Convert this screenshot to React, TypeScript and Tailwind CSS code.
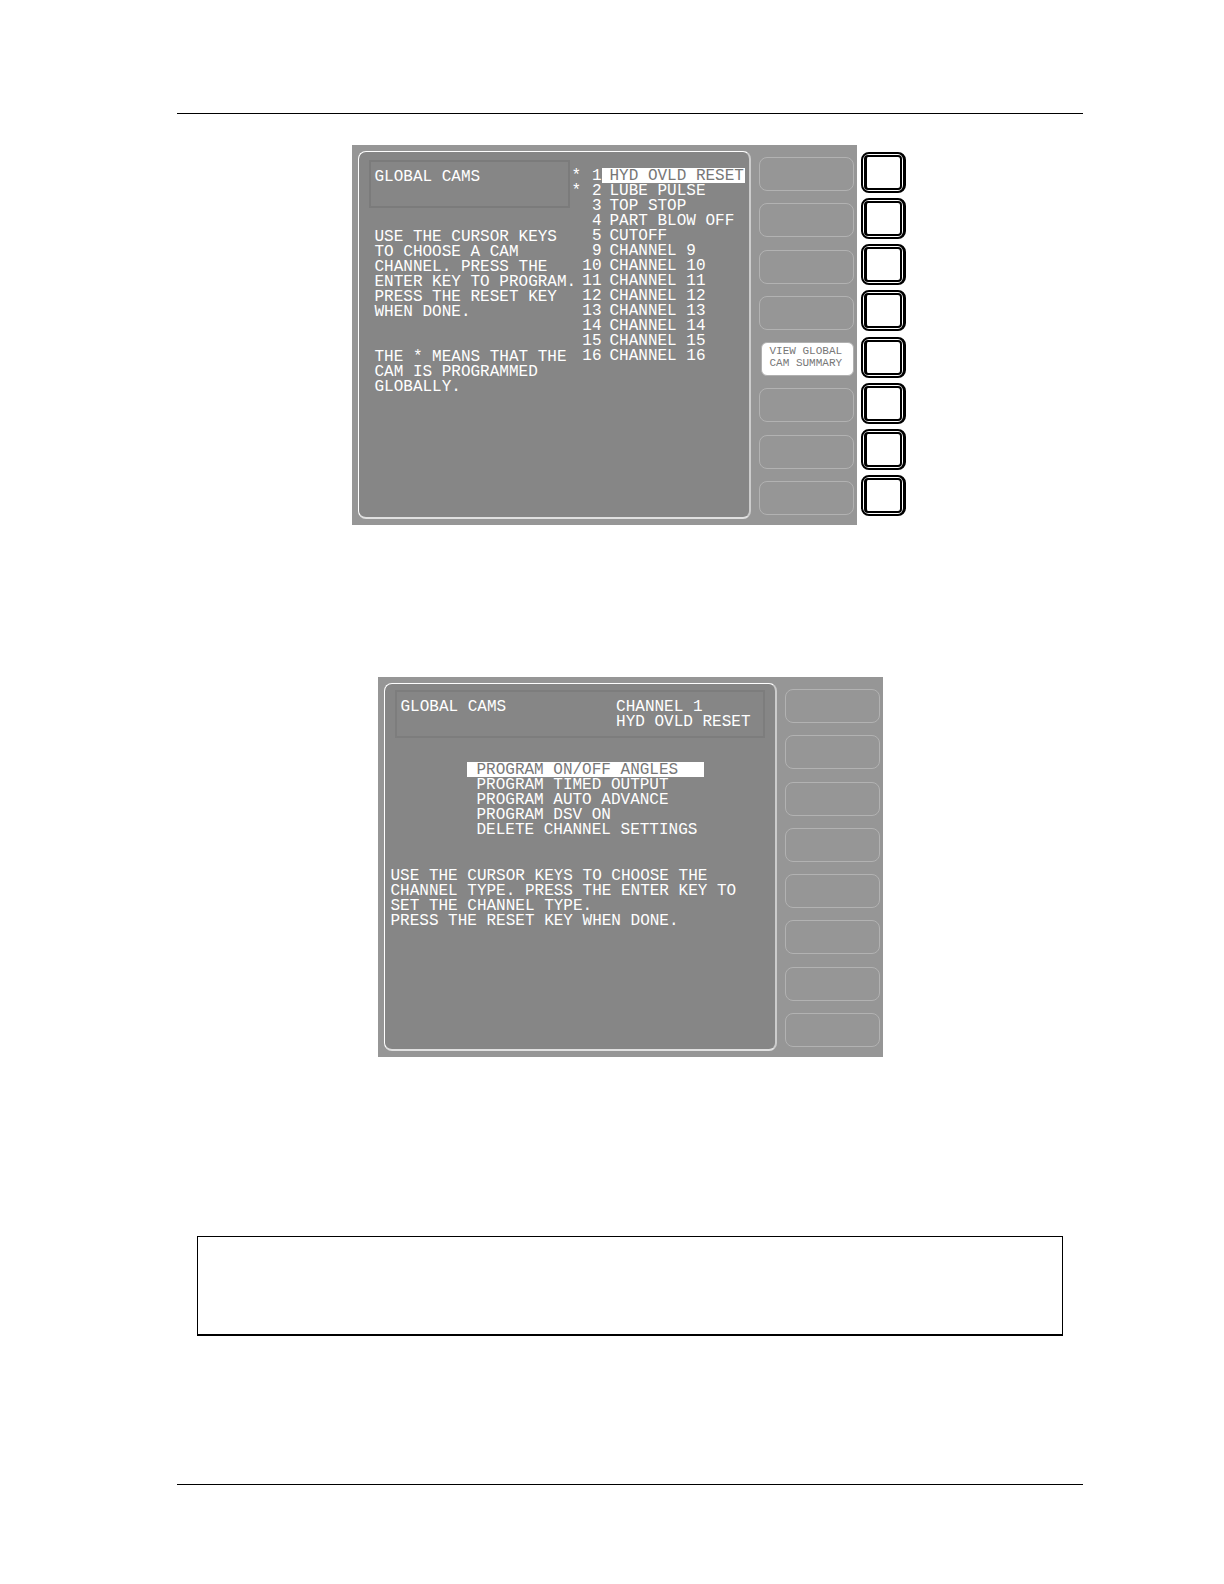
import React from 'react';
import clsx from 'clsx';

type Channel = { num: number; name: string; global?: boolean };

const channels: Channel[] = [
  { num: 1, name: 'HYD OVLD RESET', global: true },
  { num: 2, name: 'LUBE PULSE', global: true },
  { num: 3, name: 'TOP STOP' },
  { num: 4, name: 'PART BLOW OFF' },
  { num: 5, name: 'CUTOFF' },
  { num: 9, name: 'CHANNEL 9' },
  { num: 10, name: 'CHANNEL 10' },
  { num: 11, name: 'CHANNEL 11' },
  { num: 12, name: 'CHANNEL 12' },
  { num: 13, name: 'CHANNEL 13' },
  { num: 14, name: 'CHANNEL 14' },
  { num: 15, name: 'CHANNEL 15' },
  { num: 16, name: 'CHANNEL 16' },
];

const programOptions = [
  'PROGRAM ON/OFF ANGLES',
  'PROGRAM TIMED OUTPUT',
  'PROGRAM AUTO ADVANCE',
  'PROGRAM DSV ON',
  'DELETE CHANNEL SETTINGS',
];

const emptyKeys = ['', '', '', '', '', '', '', ''];
const summaryKeys = ['', '', '', '', 'VIEW GLOBAL\nCAM SUMMARY', '', '', ''];

const SoftKeys: React.FC<{ labels: string[] }> = ({ labels }) => (
  <div className="flex w-[95px] flex-col justify-between pt-1.5 pb-1">
    {labels.map((label, i) => (
      <button
        key={i}
        type="button"
        aria-label={label ? undefined : `Soft key ${i + 1}`}
        className={clsx(
          'h-[34px] rounded-lg border text-left text-[11px] leading-3 whitespace-pre',
          label ? 'ml-0.5 rounded-md border-[#b0b0b0] bg-white pb-1 pl-2 text-[#777777]' : 'border-[#b2b2b2]'
        )}
      >
        {label}
      </button>
    ))}
  </div>
);

const Screen: React.FC<{ labels: string[]; children: React.ReactNode }> = ({ labels, children }) => (
  <div className="flex h-[380px] w-[505px] justify-between bg-[#969696] py-1.5 pr-[3px] pl-1.5">
    <div className="w-[393px] rounded-lg border border-r-2 border-b-2 border-white border-r-[#cccccc] border-b-[#e0e0e0] bg-[#868686] text-[16px] leading-[15px] text-white">
      {children}
    </div>
    <SoftKeys labels={labels} />
  </div>
);

// Buttons on the bezel, one beside each soft key
const HardKeys = () => (
  <div className="flex h-[380px] flex-col justify-between pt-[7px] pb-[9px]">
    {emptyKeys.map((_, i) => (
      <button
        key={i}
        type="button"
        aria-label={`Key ${i + 1}`}
        className="flex h-[41px] w-[45px] rounded-lg border-2 border-r-3 border-black bg-white p-px"
      >
        <span className="h-full w-full rounded-sm border-2 border-l-3 border-black" />
      </button>
    ))}
  </div>
);

const CamListScreen = () => (
  <Screen labels={summaryKeys}>
    <div className="flex pt-2 pl-2.5">
      <div className="w-[201px] shrink-0">
        <h2 className="h-12 border-2 border-[#7b7b7b] pt-2 pl-1">GLOBAL CAMS</h2>
        <p className="mt-[22px] pl-1.5 whitespace-pre">
          {'USE THE CURSOR KEYS\nTO CHOOSE A CAM\nCHANNEL. PRESS THE\nENTER KEY TO PROGRAM.\nPRESS THE RESET KEY\nWHEN DONE.'}
        </p>
        <p className="mt-[30px] pl-1.5 whitespace-pre">
          {'THE * MEANS THAT THE\nCAM IS PROGRAMMED\nGLOBALLY.'}
        </p>
      </div>
      <ul className="mt-2 w-[175px]">
        {channels.map((ch, i) => (
          <li key={ch.num} className="flex h-[15px] leading-[17px]">
            <span className="w-3 pl-0.5">{ch.global && '*'}</span>
            <span className="w-5 text-right">{ch.num}</span>
            <button
              type="button"
              className={clsx('flex-1 pl-2 text-left whitespace-nowrap', i === 0 && 'bg-white text-[#777777]')}
            >
              {ch.name}
            </button>
          </li>
        ))}
      </ul>
    </div>
  </Screen>
);

const ChannelScreen = () => (
  <Screen labels={emptyKeys}>
    <div className="mx-2.5 mt-1.5 flex h-12 justify-between border-2 border-[#7d7d7d] pt-2 pr-3 pl-1">
      <h2>GLOBAL CAMS</h2>
      <p className="whitespace-pre">{'CHANNEL 1\nHYD OVLD RESET'}</p>
    </div>
    <ul className="mt-6 ml-[82px] w-[237px]">
      {programOptions.map((option, i) => (
        <li key={option} className="flex h-[15px] leading-[17px]">
          <button
            type="button"
            className={clsx('flex-1 pl-2.5 text-left whitespace-nowrap', i === 0 && 'bg-white text-[#777777]')}
          >
            {option}
          </button>
        </li>
      ))}
    </ul>
    <p className="mt-8 pl-1.5 whitespace-pre">
      {'USE THE CURSOR KEYS TO CHOOSE THE\nCHANNEL TYPE. PRESS THE ENTER KEY TO\nSET THE CHANNEL TYPE.\nPRESS THE RESET KEY WHEN DONE.'}
    </p>
  </Screen>
);

const App: React.FC = () => {
  return (
    <main className="min-h-screen bg-white pt-[113px] pr-[141px] pb-24 pl-[177px] font-['Liberation_Mono',monospace]">
      <div className="border-y border-black pt-[31px] pb-[148px]">
        <section className="flex justify-center gap-1 pr-[3px]">
          <CamListScreen />
          <HardKeys />
        </section>

        <section className="mt-38 flex justify-center">
          <ChannelScreen />
        </section>

        {/* Note box */}
        <div className="mx-5 mt-[179px] h-[100px] border border-b-2 border-black" />
      </div>
    </main>
  );
};

export default App;
